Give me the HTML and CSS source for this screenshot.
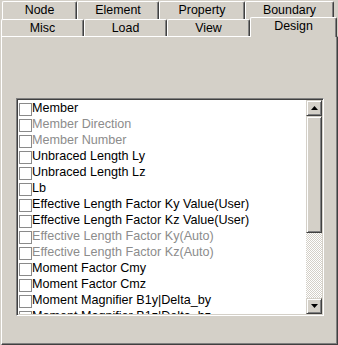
FILE: index.html
```html
<!DOCTYPE html>
<html lang="en">
<head>
    <meta charset="UTF-8">
    <title>Design</title>
    <link rel="stylesheet" href="styles.css">
</head>
<body>
    <div class="tab-row row-back">
        <div class="tab w75">Node</div>
        <div class="tab w82">Element</div>
        <div class="tab w86">Property</div>
        <div class="tab w89">Boundary</div>
    </div>
    <div class="tab-row row-front">
        <div class="tab w83">Misc</div>
        <div class="tab w83">Load</div>
        <div class="tab w83">View</div>
        <div class="tab active">Design</div>
    </div>

    <div class="panel">
        <div class="listbox">
            <div class="items">
                <div class="item"><span class="check"></span>Member</div>
                <div class="item off"><span class="check"></span>Member Direction</div>
                <div class="item off"><span class="check"></span>Member Number</div>
                <div class="item"><span class="check"></span>Unbraced Length Ly</div>
                <div class="item"><span class="check"></span>Unbraced Length Lz</div>
                <div class="item"><span class="check"></span>Lb</div>
                <div class="item"><span class="check"></span>Effective Length Factor Ky Value(User)</div>
                <div class="item"><span class="check"></span>Effective Length Factor Kz Value(User)</div>
                <div class="item off"><span class="check"></span>Effective Length Factor Ky(Auto)</div>
                <div class="item off"><span class="check"></span>Effective Length Factor Kz(Auto)</div>
                <div class="item"><span class="check"></span>Moment Factor Cmy</div>
                <div class="item"><span class="check"></span>Moment Factor Cmz</div>
                <div class="item"><span class="check"></span>Moment Magnifier B1y|Delta_by</div>
                <div class="item"><span class="check"></span>Moment Magnifier B1z|Delta_bz</div>
            </div>
            <div class="scrollbar">
                <div class="sbtn">
                    <svg width="7" height="4" viewBox="0 0 7 4"><polygon points="3.5,0 7,4 0,4" fill="#000"/></svg>
                </div>
                <div class="thumb"></div>
                <div class="track"></div>
                <div class="sbtn">
                    <svg width="7" height="4" viewBox="0 0 7 4"><polygon points="0,0 7,0 3.5,4" fill="#000"/></svg>
                </div>
            </div>
        </div>
    </div>
</body>
</html>
```

FILE: styles.css
```css
body {
    margin: 0;
    background: #d4d0c8;
    font-family: "Liberation Sans", Arial, sans-serif;
    font-size: 12px;
    color: #000;
    width: 338px;
    height: 345px;
    overflow: hidden;
}
.tab-row {
    display: flex;
    align-items: flex-end;
}
.row-back {
    margin-top: 1px;
    height: 18px;
    padding-left: 2px;
}
.row-front {
    height: 17px;
    padding-left: 1px;
}
.tab {
    box-sizing: border-box;
    height: 100%;
    background: #d4d0c8;
    border-top: 1px solid #fff;
    border-left: 1px solid #fff;
    border-right: 1px solid #404040;
    border-radius: 2px 2px 0 0;
    box-shadow: inset -1px 0 #808080;
    text-align: center;
    line-height: 16px;
    font-size: 12.4px;
}
.w75 { width: 75px; }
.w82 { width: 82px; }
.w83 { width: 83px; }
.w86 { width: 86px; }
.w89 { width: 89px; }
.tab.active {
    position: relative;
    z-index: 1;
    width: 87px;
    height: 20px;
    margin-bottom: -1px;
    line-height: 16px;
}
.panel {
    box-sizing: border-box;
    margin-left: 1px;
    width: 337px;
    height: 309px;
    border-top: 1px solid #fff;
    border-left: 1px solid #fff;
    border-right: 1px solid #404040;
    border-bottom: 1px solid #404040;
    box-shadow: inset -1px -1px #808080;
    padding: 61px 0 0 14px;
}
.listbox {
    box-sizing: border-box;
    width: 308px;
    height: 218px;
    border: 1px solid;
    border-color: #808080 #fff #fff #808080;
    box-shadow: inset 1px 1px #404040, inset -1px -1px #d4d0c8;
    padding: 1px;
    display: flex;
    background: #fff;
}
.items {
    flex: 1;
    overflow: hidden;
    font-size: 12.6px;
}
.item {
    height: 16px;
    display: flex;
    align-items: center;
    white-space: nowrap;
    padding-left: 1px;
}
.item.off {
    color: #8c8c8c;
}
.check {
    box-sizing: border-box;
    width: 13px;
    height: 13px;
    border: 1px solid #8a8a8a;
    background: #fff;
    margin-top: 3px;
    align-self: flex-start;
}
.scrollbar {
    width: 16px;
    display: flex;
    flex-direction: column;
}
.sbtn, .thumb {
    box-sizing: border-box;
    background: #d4d0c8;
    border: 1px solid;
    border-color: #d4d0c8 #404040 #404040 #d4d0c8;
    box-shadow: inset 1px 1px #fff, inset -1px -1px #808080;
}
.sbtn {
    height: 16px;
    display: flex;
    align-items: center;
    justify-content: center;
}
.thumb {
    height: 117px;
}
.track {
    flex: 1;
    background-color: #fff;
    background-image: repeating-conic-gradient(#d4d0c8 0 25%, #fff 0 50%);
    background-size: 2px 2px;
}
```
